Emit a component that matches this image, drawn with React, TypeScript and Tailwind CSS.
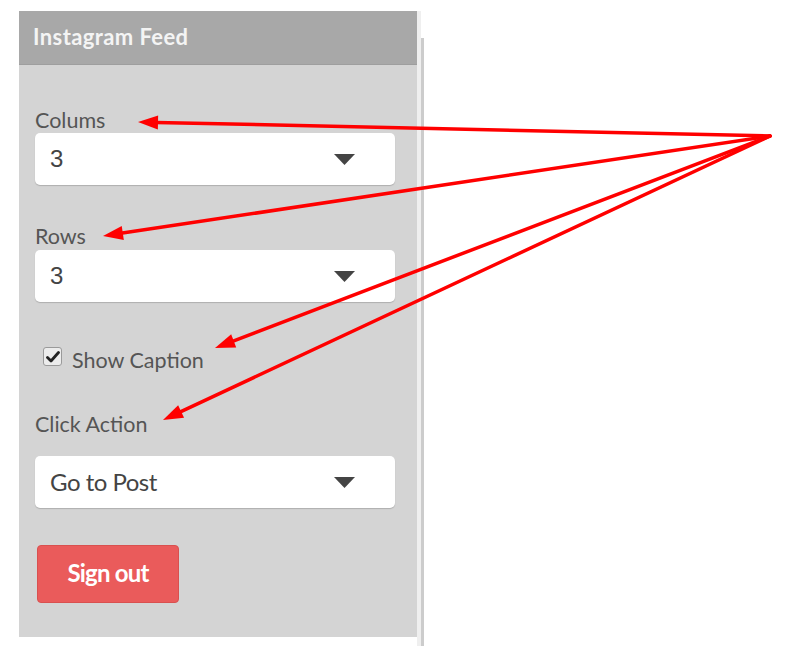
import type { ReactNode } from "react";

const ORIGIN = { x: 770, y: 136 };
const TIPS = [
  { x: 138, y: 122 },
  { x: 103, y: 236 },
  { x: 215, y: 348 },
  { x: 163, y: 420 },
];

function Arrow({ tip }: { tip: { x: number; y: number } }) {
  const dx = tip.x - ORIGIN.x;
  const dy = tip.y - ORIGIN.y;
  const len = Math.hypot(dx, dy);
  const ux = dx / len;
  const uy = dy / len;
  const head = 20;
  const half = 7;
  const bx = tip.x - ux * head;
  const by = tip.y - uy * head;
  const points = `${tip.x},${tip.y} ${bx - uy * half},${by + ux * half} ${bx + uy * half},${by - ux * half}`;
  return (
    <g>
      <line x1={ORIGIN.x} y1={ORIGIN.y} x2={bx + ux * 2} y2={by + uy * 2} stroke="#ff0000" strokeWidth={3.5} strokeLinecap="round" />
      <polygon points={points} fill="#ff0000" />
    </g>
  );
}

function Caret() {
  return (
    <svg width="21" height="11" viewBox="0 0 21 11" className="shrink-0">
      <polygon points="0,0 21,0 10.5,11" fill="#444" />
    </svg>
  );
}

function SelectBox({ children, mono }: { children: ReactNode; mono?: boolean }) {
  return (
    <div className="flex h-[52px] w-[360px] items-center justify-between rounded-[5px] bg-white pl-[15px] pr-[40px] shadow-[0_1px_1px_rgba(0,0,0,0.18)]">
      <span className={mono ? "font-['Liberation_Sans',Arial,sans-serif] text-[24px] text-[#444]" : "text-[24px] tracking-[-0.5px] text-[#444]"}>{children}</span>
      <Caret />
    </div>
  );
}

function Label({ children, className = "" }: { children: ReactNode; className?: string }) {
  return <p className={`h-[24px] text-[21.5px] leading-[24px] text-[#555] ${className}`}>{children}</p>;
}

export default function App() {
  return (
    <div className="relative h-[646px] w-[793px] overflow-hidden bg-white font-['Lato','Open_Sans',sans-serif]">
      <div className="flex h-full pl-[19px] pt-[11px]">
        <aside className="h-[626px] w-[398px] bg-[#d4d4d4]">
          <header className="flex h-[54px] items-center border-b border-[#9e9e9e] bg-[#a8a8a8] pl-[14px] pb-[3px]">
            <h2 className="text-[22px] font-bold tracking-[0.4px] text-[#f4f4f4]">Instagram Feed</h2>
          </header>

          <div className="flex flex-col pl-[16px]">
            <Label className="mt-[43px]">Colums</Label>
            <div className="mt-[1px]"><SelectBox mono>3</SelectBox></div>

            <Label className="mt-[39px]">Rows</Label>
            <div className="mt-[2px]"><SelectBox mono>3</SelectBox></div>

            <label className="mt-[45px] flex h-[25px] items-start pl-[8px]">
              <span className="flex h-[19px] w-[19px] items-center justify-center rounded-[3px] border border-[#9a9a9a] bg-[#ececec]">
                <svg width="14" height="12" viewBox="0 0 14 12">
                  <path d="M1.5 6.5 L5 10 L12.5 1.5" fill="none" stroke="#222" strokeWidth="2.8" strokeLinecap="round" strokeLinejoin="round" />
                </svg>
              </span>
              <span className="ml-[10px] mt-[1px] text-[21.5px] leading-[24px] text-[#555]">Show Caption</span>
            </label>

            <Label className="mt-[40px]">Click Action</Label>
            <div className="mt-[20px]"><SelectBox>Go to Post</SelectBox></div>

            <button type="button" className="ml-[2px] mt-[37px] flex h-[58px] w-[142px] items-center justify-center rounded-[4px] border border-[#d9504f] bg-[#ea5b5b] pb-[2px] text-[24px] font-bold tracking-[-0.8px] text-white">
              Sign out
            </button>
          </div>
        </aside>
        <div className="h-full w-[4px] bg-[#efefef]" />
        <div className="mt-[27px] h-full w-[3px] bg-[#cccccc]" />
      </div>

      <svg className="pointer-events-none absolute inset-0" width="793" height="646" viewBox="0 0 793 646">
        {TIPS.map((tip) => (
          <Arrow key={`${tip.x}-${tip.y}`} tip={tip} />
        ))}
      </svg>
    </div>
  );
}
